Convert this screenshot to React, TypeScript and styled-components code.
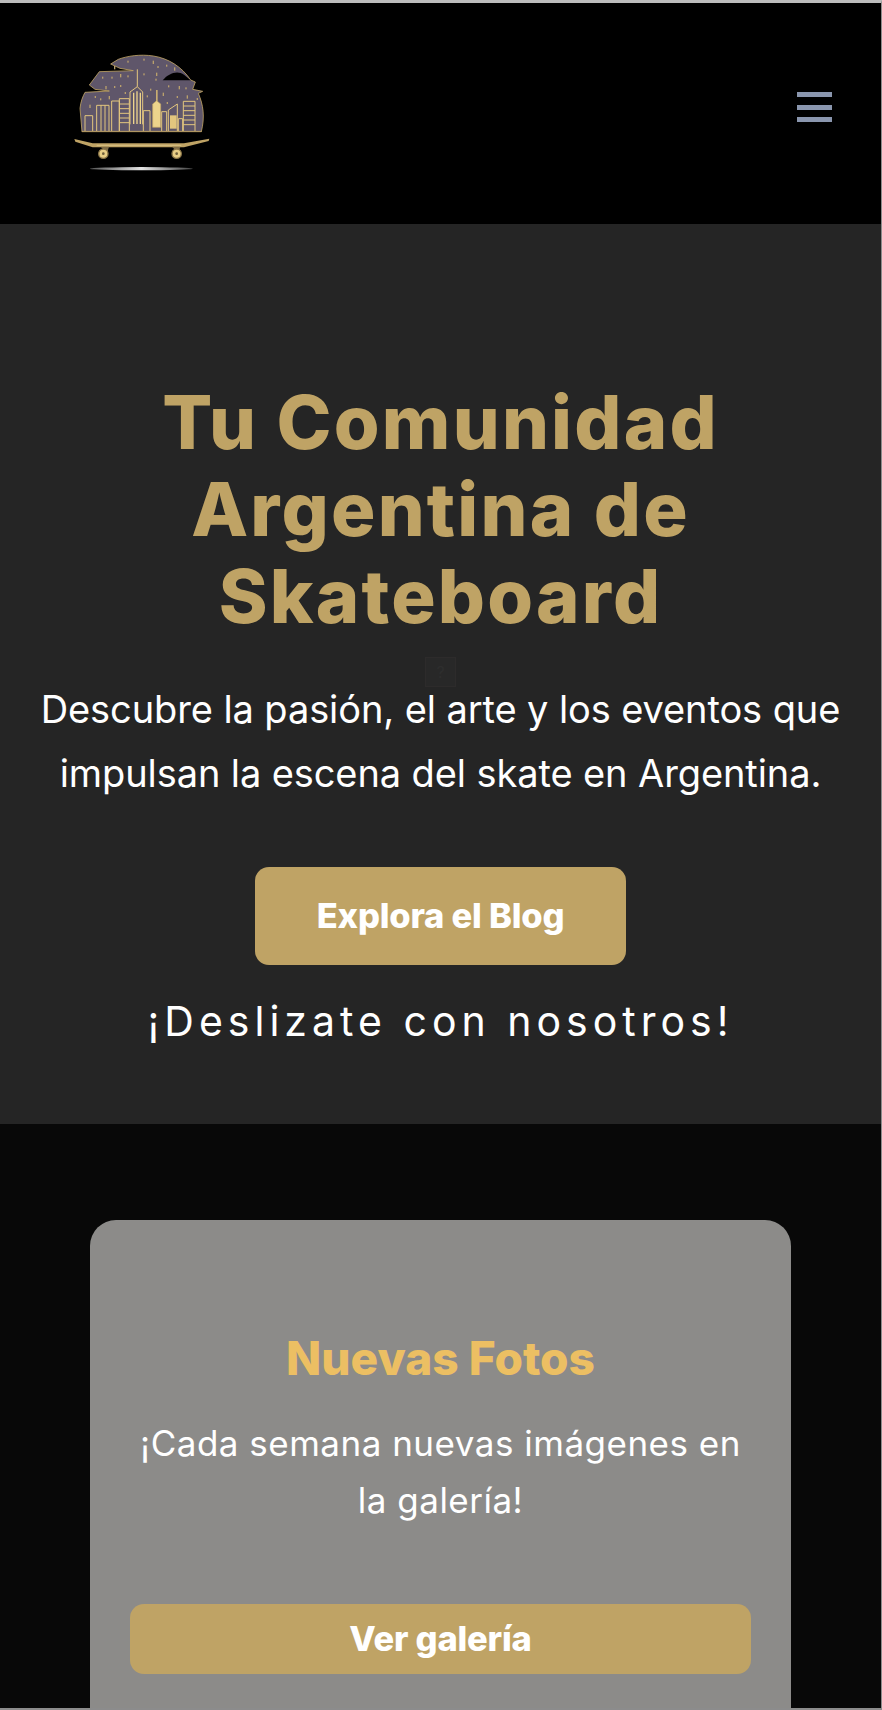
import React from 'react';
import styled, { createGlobalStyle } from 'styled-components';

const GlobalStyle = createGlobalStyle`
  html, body {
    margin: 0;
    padding: 0;
    background: #080808;
  }
  body {
    font-family: 'Inter', 'Liberation Sans', sans-serif;
    color: #fff;
    overflow: hidden;
  }
  * {
    box-sizing: border-box;
  }
`;

const Page = styled.div`
  display: flex;
  flex-direction: column;
  height: 1710px;
  overflow: hidden;
  border-top: 3px solid #bcbcbc;
  border-right: 1px solid #8c8c8c;
  border-bottom: 2px solid #8c8c8c;
`;

const Header = styled.header`
  display: flex;
  flex-shrink: 0;
  align-items: flex-start;
  justify-content: space-between;
  height: 221px;
  padding: 27px 49px 0 40px;
  background: #000;
`;

const MenuButton = styled.button`
  display: flex;
  flex-direction: column;
  gap: 7.5px;
  margin-top: 62px;
  padding: 0;
  border: 0;
  background: none;
`;

const MenuBar = styled.span`
  display: block;
  width: 35px;
  height: 5px;
  background: #8a96ae;
`;

const Hero = styled.section`
  display: flex;
  flex-shrink: 0;
  flex-direction: column;
  align-items: center;
  height: 900px;
  padding: 155px 30px 0;
  background: #252525;
  text-align: center;
`;

const Title = styled.h1`
  margin: 0;
  color: #bfa365;
  font-size: 74px;
  font-weight: 800;
  line-height: 87px;
  letter-spacing: 2.2px;
`;

/* broken image left in the hero, barely visible */
const BrokenImage = styled.span`
  display: flex;
  align-items: center;
  justify-content: center;
  width: 31px;
  height: 30px;
  margin: 17px 0 -10px;
  border: 1px solid #2d2b2b;
  background: #282828;
  color: #2e2e2e;
  font-size: 16px;
`;

const Lead = styled.p`
  margin: 0;
  font-size: 38px;
  font-weight: 400;
  line-height: 64px;
  letter-spacing: -0.1px;
`;

const HeroButton = styled.a`
  display: flex;
  flex-shrink: 0;
  align-items: center;
  justify-content: center;
  width: 371px;
  height: 98px;
  margin-top: 62px;
  padding-bottom: 2px;
  border-radius: 14px;
  background: #bfa365;
  color: #fff;
  font-size: 34.5px;
  font-weight: 800;
  letter-spacing: -0.2px;
`;

const Tagline = styled.p`
  margin: 31px 0 0;
  font-size: 41px;
  font-weight: 400;
  line-height: 50px;
  letter-spacing: 5px;
`;

const Cards = styled.section`
  flex: 1;
  padding: 96px 90px 0 90px;
  background: #080808;
`;

const Card = styled.article`
  display: flex;
  flex-direction: column;
  align-items: center;
  height: 600px;
  padding: 111px 40px 0;
  border-radius: 26px;
  background: #8c8b89;
  text-align: center;
`;

const CardTitle = styled.h2`
  margin: 0;
  color: #ecbf63;
  font-size: 46px;
  font-weight: 800;
  line-height: 54px;
`;

const CardText = styled.p`
  margin: 30px 0 0;
  font-size: 35px;
  line-height: 57px;
  letter-spacing: 0.5px;
`;

const CardButton = styled.a`
  display: flex;
  flex-shrink: 0;
  align-items: center;
  justify-content: center;
  width: 100%;
  height: 70px;
  margin-top: 75px;
  padding-bottom: 2px;
  border-radius: 14px;
  background: #bfa365;
  color: #fff;
  font-size: 34.5px;
  font-weight: 800;
  letter-spacing: -0.2px;
`;

const windowDots = [
  [222, 108], [262, 92], [310, 86], [338, 92], [352, 108], [378, 104], [402, 112], [186, 140],
  [214, 140], [240, 132], [262, 136], [310, 130], [348, 128], [346, 146], [384, 166], [416, 168],
  [240, 165], [222, 168], [196, 168], [164, 198], [180, 205], [206, 198], [254, 186], [320, 196],
  [368, 188], [410, 198], [436, 172], [148, 224], [380, 216], [330, 176], [440, 196], [470, 204],
];

const Logo = () => (
  <svg width="200" height="160" viewBox="0 0 600 480" aria-label="logo">
    <defs>
      <linearGradient id="shadow" x1="0" x2="1" y1="0" y2="0">
        <stop offset="0" stopColor="#555" />
        <stop offset="0.5" stopColor="#e2e2e2" />
        <stop offset="1" stopColor="#444" />
      </linearGradient>
    </defs>
    <path
      d="M126 305 L120 235 C122 215 128 200 135 187 L208 183 L165 178 L148 165 L178 125 L280 122 L240 115 L212 102 L235 88 C262 78 300 72 340 78 C385 85 425 110 452 150 L466 156 L458 178 L488 184 L475 190 C490 225 495 260 484 305 Z"
      fill="#5f566a"
      stroke="#bfa365"
      strokeWidth="2.5"
    />
    <path d="M368 151 C385 130 412 120 432 134 L452 151 Z" fill="#000" />
    <g fill="#b9a06c">
      {windowDots.map(([x, y], i) => (
        <rect key={`${x}-${y}`} x={x} y={y} width="4" height={i % 3 === 0 ? 10 : 6} />
      ))}
    </g>
    <g fill="none" stroke="#e3c67e" strokeWidth="3">
      <path d="M135 303V257H158V303M170 303V226H207V303M183 226V303M195 226V303" />
      <path d="M215 303V213H238V303M238 303V206H268V303M238 222H268M238 236H268M238 250H268M238 264H268M238 278H268" />
      <path d="M270 283V186L292 170L308 186V283M292 170V118" />
      <path d="M310 303V242H330V303M365 303V245H380V303M385 303V240L412 222V303M415 303V266H428V303" />
      <path d="M430 303V214H465V303M430 228H465M430 242H465M430 256H465M430 270H465M430 284H465" />
    </g>
    <path d="M279 188h4v94h-4zM289 184h4v98h-4zM299 188h4v94h-4z" fill="#edd48c" />
    <path d="M348 180h5v34h-5z" fill="#c9ae72" />
    <path d="M338 222 L350 212 L362 222 V292 H338 Z" fill="#edd48c" stroke="#bfa365" strokeWidth="2" />
    <path d="M390 256h20v40h-20z" fill="#e3c67e" />
    <path d="M125 304H486" stroke="#bfa365" strokeWidth="2" />
    <path
      d="M103 327 L158 340 L432 340 L508 326 L506 333 L432 352 L158 352 L106 335 Z"
      fill="#bfa365"
    />
    <path d="M170 346H424" stroke="#f0dca0" strokeWidth="1.5" />
    <path d="M182 350l25 0-6 20zM396 350l25 0-6 20z" fill="#7d6b45" />
    <circle cx="190" cy="371" r="14" fill="#e8cd85" stroke="#8a7548" strokeWidth="4" />
    <circle cx="190" cy="371" r="4" fill="#6d5d3a" />
    <circle cx="410" cy="371" r="14" fill="#e8cd85" stroke="#8a7548" strokeWidth="4" />
    <circle cx="410" cy="371" r="4" fill="#6d5d3a" />
    <ellipse cx="304" cy="416" rx="154" ry="5" fill="url(#shadow)" />
  </svg>
);

export default function App() {
  return (
    <>
      <GlobalStyle />
      <Page>
        <Header>
          <Logo />
          <MenuButton aria-label="Menu">
            <MenuBar />
            <MenuBar />
            <MenuBar />
          </MenuButton>
        </Header>
        <Hero>
          <Title>Tu Comunidad Argentina de Skateboard</Title>
          <BrokenImage>?</BrokenImage>
          <Lead>
            Descubre la pasión, el arte y los eventos que impulsan la escena del skate en Argentina.
          </Lead>
          <HeroButton>Explora el Blog</HeroButton>
          <Tagline>¡Deslizate con nosotros!</Tagline>
        </Hero>
        <Cards>
          <Card>
            <CardTitle>Nuevas Fotos</CardTitle>
            <CardText>¡Cada semana nuevas imágenes en la galería!</CardText>
            <CardButton>Ver galería</CardButton>
          </Card>
        </Cards>
      </Page>
    </>
  );
}
